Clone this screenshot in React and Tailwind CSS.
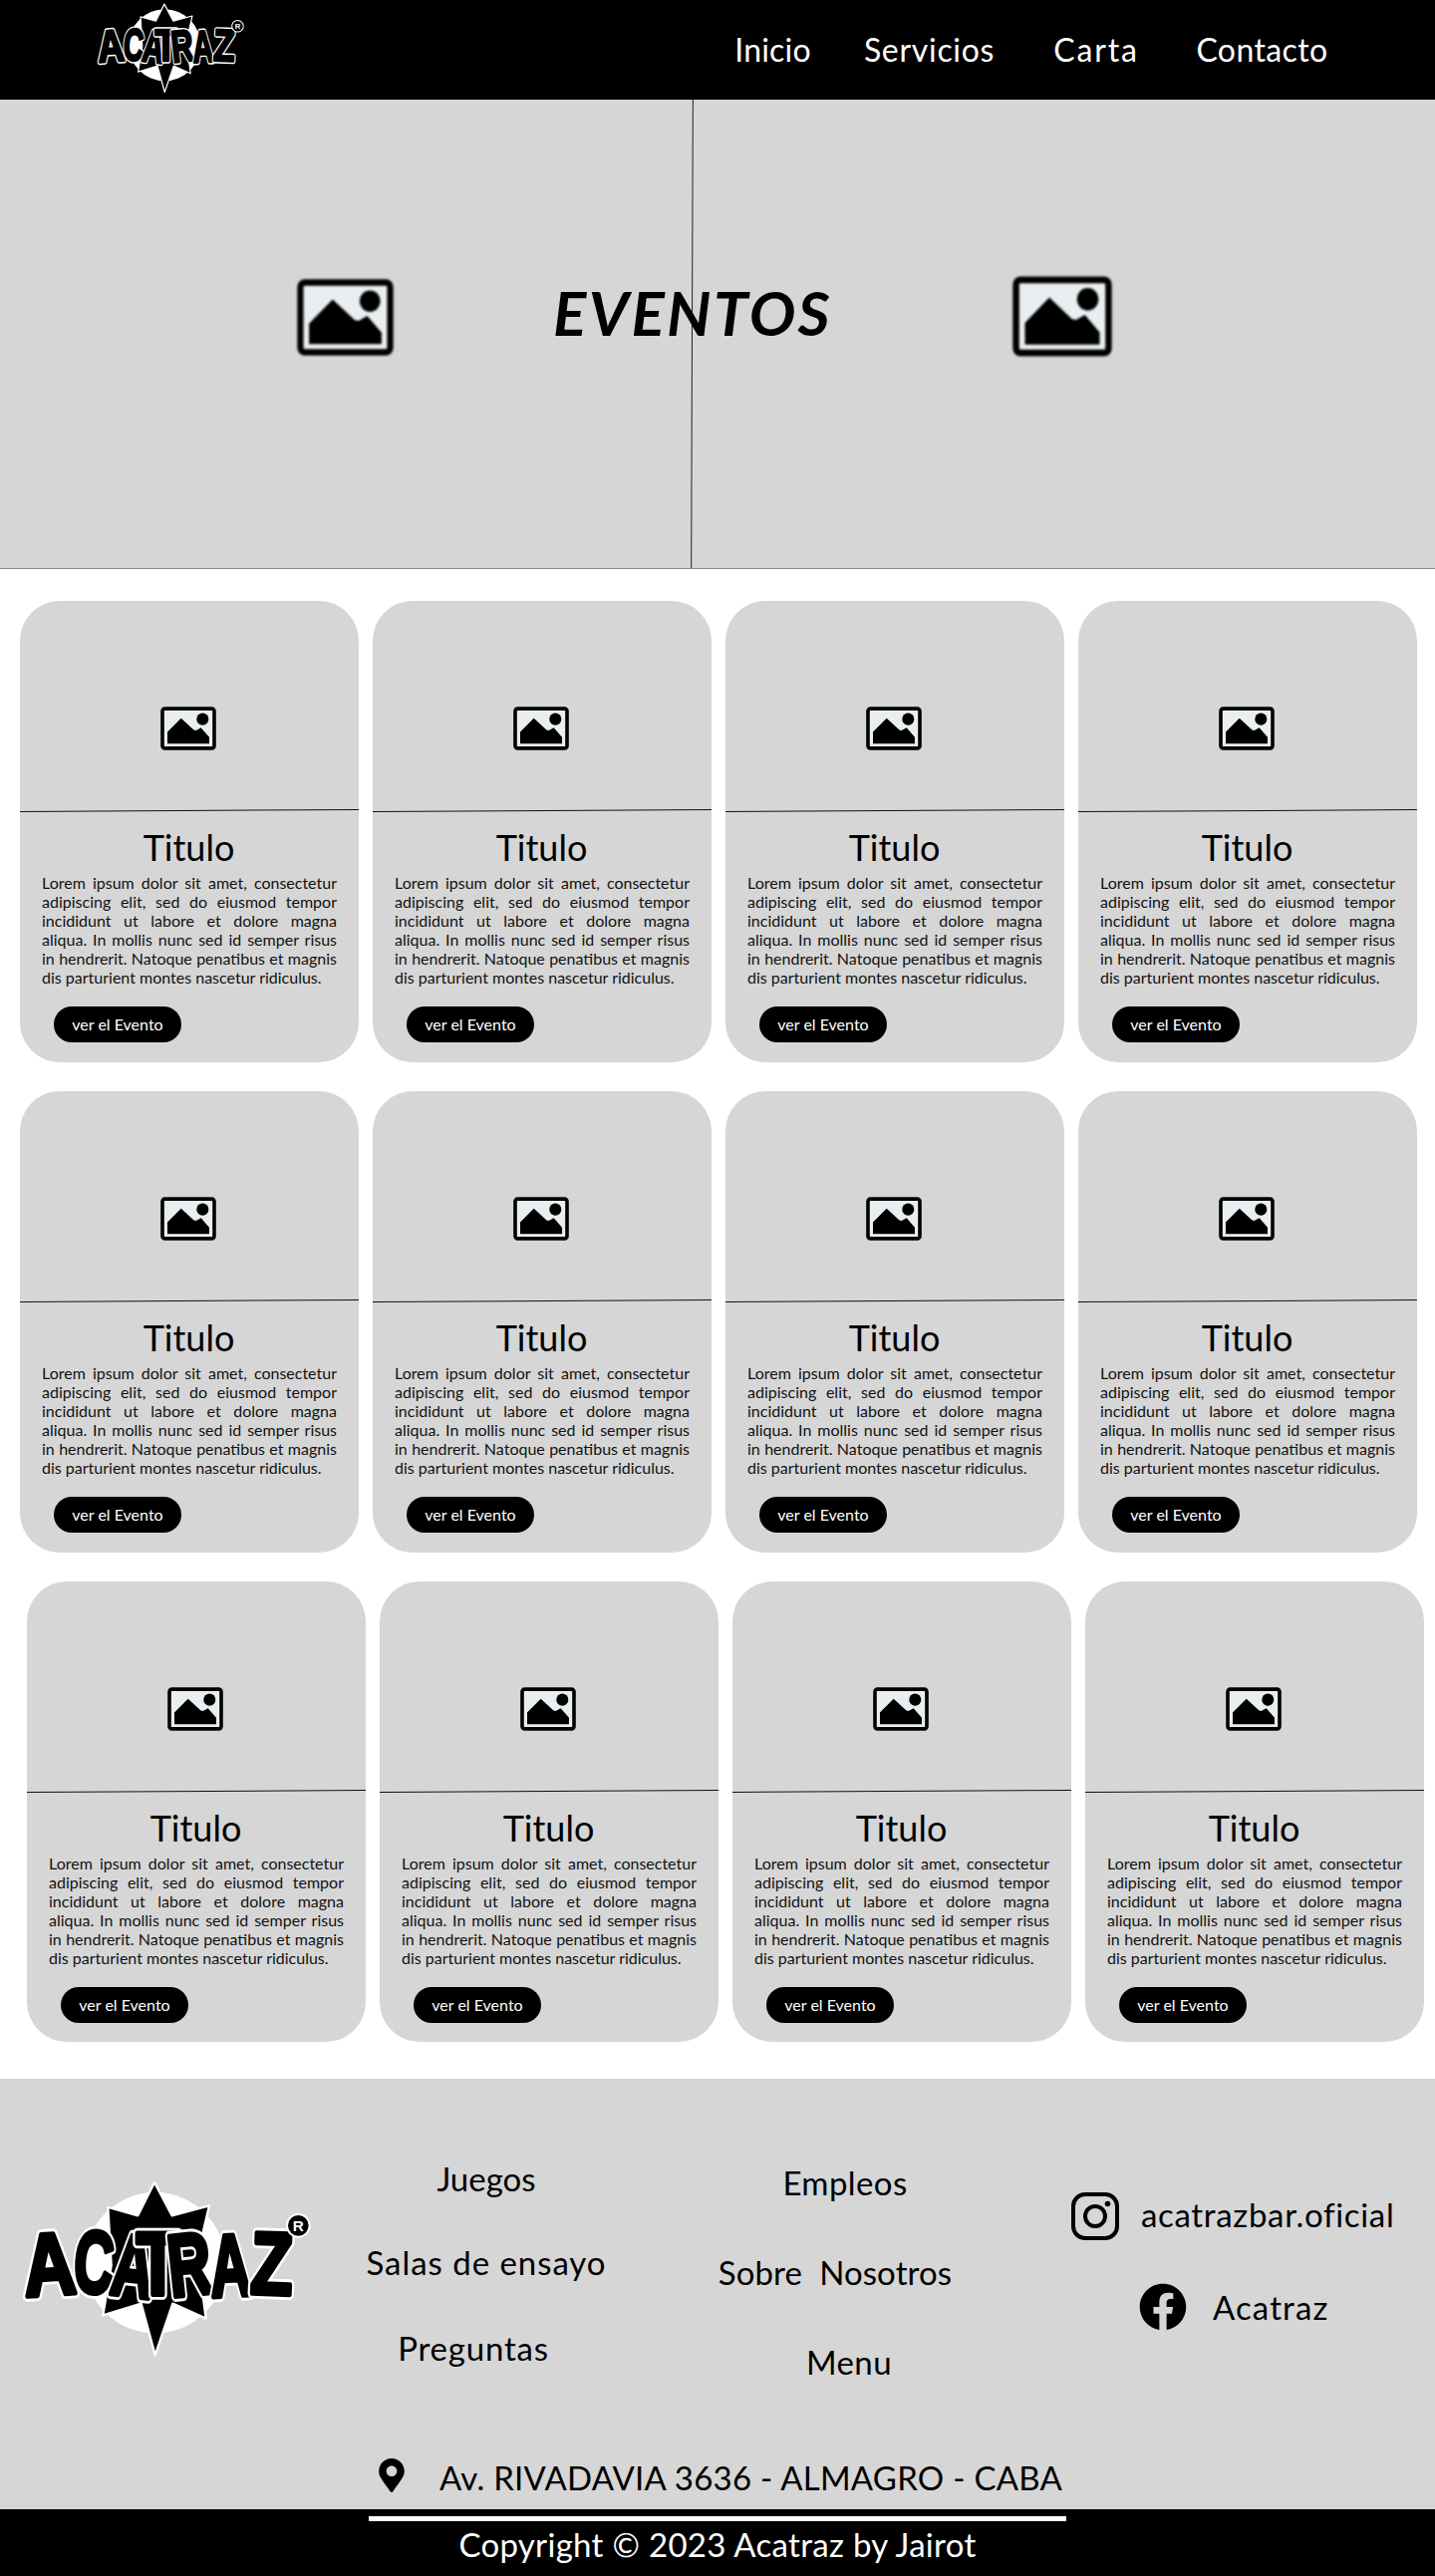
import React from "react";
import { FaFacebook, FaMapMarkerAlt } from "react-icons/fa";

const LETTERS = [
  ["A", 125, 368, -4, 0.82],
  ["C", 247, 362, 4, 0.62],
  ["A", 360, 372, 7, 0.66],
  ["T", 445, 366, 0, 0.8],
  ["R", 550, 368, -6, 0.68],
  ["A", 668, 372, -3, 0.64],
  ["Z", 785, 366, 2, 0.78],
];

function Logo({ className }) {
  const star = "M435 30 L488 130 L600 100 L565 250 L590 440 L490 395 L437 550 L395 395 L280 430 L305 280 L295 105 L385 130 Z";
  const font = { fontFamily: "'Liberation Sans', Arial, sans-serif", fontWeight: 700, fontSize: 265 };
  return (
    <svg viewBox="0 0 930 600" className={className} aria-label="Acatraz">
      <circle cx="437" cy="272" r="212" fill="#fff" />
      <path d={star} fill="#000" stroke="#fff" strokeWidth="7" strokeLinejoin="round" />
      {LETTERS.map(([ch, x, y, rot, sx], i) => (
        <g key={i} transform={`translate(${x} ${y}) rotate(${rot}) scale(${sx} 1)`} style={font} textAnchor="middle">
          <text stroke="#fff" strokeWidth="32" strokeLinejoin="round" fill="#fff">{ch}</text>
          <text stroke="#000" strokeWidth="15" strokeLinejoin="round" fill="#000">{ch}</text>
        </g>
      ))}
      <circle cx="868" cy="160" r="34" fill="#000" stroke="#fff" strokeWidth="6" />
      <text x="868" y="177" textAnchor="middle" fill="#fff" style={{ fontFamily: "'Liberation Sans', Arial, sans-serif", fontWeight: 700, fontSize: 46 }}>R</text>
    </svg>
  );
}

function ImageIcon({ className }) {
  return (
    <svg viewBox="0 0 56 43" preserveAspectRatio="none" className={className}>
      <rect x="2" y="2" width="52" height="39" rx="2.5" fill="#e9eef0" stroke="#000" strokeWidth="3.6" />
      <path d="M7 25 L20.7 11.4 L33.5 23 L35.7 23.4 L40.7 20.7 L49 30 L49 36.5 L7 36.5 Z" fill="#000" />
      <ellipse cx="42.3" cy="12.4" rx="6" ry="6" fill="#000" />
    </svg>
  );
}

function InstagramIcon({ className }) {
  return (
    <svg viewBox="0 0 48 48" className={className} fill="none" stroke="#000">
      <rect x="2" y="2" width="44" height="44" rx="12" strokeWidth="4" />
      <circle cx="24" cy="24" r="10" strokeWidth="4" />
      <circle cx="36.5" cy="11.5" r="2.8" fill="#000" stroke="none" />
    </svg>
  );
}

const LINES = [
  "Lorem ipsum dolor sit amet, consectetur",
  "adipiscing elit, sed do eiusmod tempor",
  "incididunt ut labore et dolore magna",
  "aliqua. In mollis nunc sed id semper risus",
  "in hendrerit. Natoque penatibus et magnis",
];

function Card({ compact }) {
  return (
    <article className={`w-[340px] overflow-hidden rounded-[40px] bg-[#d6d6d6] ${compact ? "h-[462px]" : "h-[463px]"}`}>
      <div className="flex h-[210px] items-center justify-center pr-[2px] pt-[45px]">
        <ImageIcon className="h-[44px] w-[56px]" />
      </div>
      <div className="h-px -rotate-[0.34deg] bg-[#111]" />
      <h3 className={`pr-px text-center text-[36px] leading-[44px] font-normal text-black ${compact ? "mt-[14px]" : "mt-[14px]"}`}>Titulo</h3>
      <p className="mt-[4px] px-[22px] text-[16px] leading-[19px] text-[#111]">
        {LINES.map((l) => (
          <span key={l} className="block whitespace-nowrap [text-align-last:justify]">{l}</span>
        ))}
        <span className="block whitespace-nowrap">dis parturient montes nascetur ridiculus.</span>
      </p>
      <a className="ml-[34px] mt-[20px] flex h-[36px] w-[128px] items-center justify-center rounded-full bg-black text-[16px] text-white">ver el Evento</a>
    </article>
  );
}

function Row({ className, compact }) {
  return (
    <div className={`flex gap-[14px] ${className}`}>
      {[0, 1, 2, 3].map((i) => <Card key={i} compact={compact} />)}
    </div>
  );
}

function NavLink({ className, children }) {
  return <a className={`flex justify-center whitespace-nowrap ${className}`}>{children}</a>;
}

function FootLink({ className, children }) {
  return <a className={`block whitespace-pre text-center text-[33px] leading-[40px] text-black ${className}`}>{children}</a>;
}

export default function App() {
  return (
    <div className="relative h-[2585px] w-[1440px] overflow-hidden bg-white font-['Lato',sans-serif] text-black">
      <header className="flex h-[100px] items-center bg-black">
        <Logo className="ml-[91px] h-[102px] w-[158px] shrink-0" />
        <nav className="ml-[489px] flex text-[32px] leading-[40px] text-white">
          <NavLink className="w-[75px] tracking-[0.2px]">Inicio</NavLink>
          <NavLink className="ml-[54px] w-[131px] tracking-[0.7px]">Servicios</NavLink>
          <NavLink className="ml-[61px] w-[82px] tracking-[1.8px]">Carta</NavLink>
          <NavLink className="ml-[60px] w-[131px] tracking-[0.4px]">Contacto</NavLink>
        </nav>
      </header>

      <section className="relative flex h-[471px] overflow-hidden border-b border-[#8a8a8a] bg-[#d6d6d6]">
        <div className="flex w-[695px] items-center pb-[33px] pl-[298px]">
          <ImageIcon className="h-[77px] w-[97px] blur-[1px]" />
        </div>
        <div className="flex flex-1 items-center pb-[35px] pl-[321px]">
          <ImageIcon className="h-[81px] w-[100px] blur-[1px]" />
        </div>
        <div className="absolute left-[694px] top-0 h-full w-px rotate-[0.2deg] bg-[#222]" />
        <h1 className="absolute left-[556px] top-[177px] flex w-[278px] justify-center whitespace-nowrap text-[62px] leading-[72px] font-bold italic tracking-[2.4px] text-black">EVENTOS</h1>
      </section>

      <main className="pt-[32px]">
        <Row className="pl-[20px]" />
        <Row className="mt-[29px] pl-[20px]" />
        <Row className="mt-[29px] pl-[27px]" compact />
      </main>

      <footer className="mt-[37px]">
        <div className="h-[432px] bg-[#d6d6d6]">
          <div className="flex h-[381px]">
            <div className="w-[320px] shrink-0 pl-[10px] pt-[94px]">
              <Logo className="h-[200px] w-[310px]" />
            </div>
            <div className="w-[336px] shrink-0 pt-[80px]">
              <FootLink className="text-[32px]">Juegos</FootLink>
              <FootLink className="mt-[44px] tracking-[0.95px]">Salas de ensayo</FootLink>
              <FootLink className="mt-[46px] pr-[26px] tracking-[0.8px]">Preguntas</FootLink>
            </div>
            <div className="ml-[4px] w-[376px] shrink-0 pt-[84px]">
              <FootLink className="tracking-[0.4px]">Empleos</FootLink>
              <FootLink className="mt-[50px] pr-[20px] tracking-[0.1px]">{"Sobre  Nosotros"}</FootLink>
              <FootLink className="mt-[50px] pl-[8px] tracking-[0.4px]">Menu</FootLink>
            </div>
            <div className="pt-[114px] text-[33px] leading-[40px]">
              <a className="ml-[39px] flex items-center gap-[22px] whitespace-nowrap">
                <InstagramIcon className="h-[48px] w-[48px] shrink-0" />
                <span className="pb-[4px] tracking-[0.67px]">acatrazbar.oficial</span>
              </a>
              <a className="ml-[107px] mt-[43px] flex items-center gap-[26px] whitespace-nowrap">
                <FaFacebook className="h-[48px] w-[48px] shrink-0" />
                <span className="tracking-[1.1px]">Acatraz</span>
              </a>
            </div>
          </div>
          <div className="flex h-[34px] items-center pl-[380px] text-[33px] leading-[40px]">
            <FaMapMarkerAlt className="h-[34px] w-[26px] shrink-0" />
            <span className="ml-[35px] mt-[3px] whitespace-nowrap tracking-[0.25px]">Av. RIVADAVIA 3636 - ALMAGRO - CABA</span>
          </div>
        </div>
        <div className="h-[67px] bg-black pt-[7px] text-white">
          <div className="mx-auto h-[5px] w-[700px] bg-white" />
          <p className="mt-[3px] text-center text-[33px] leading-[40px] tracking-[0.3px]">Copyright © 2023 Acatraz by Jairot</p>
        </div>
      </footer>
    </div>
  );
}
